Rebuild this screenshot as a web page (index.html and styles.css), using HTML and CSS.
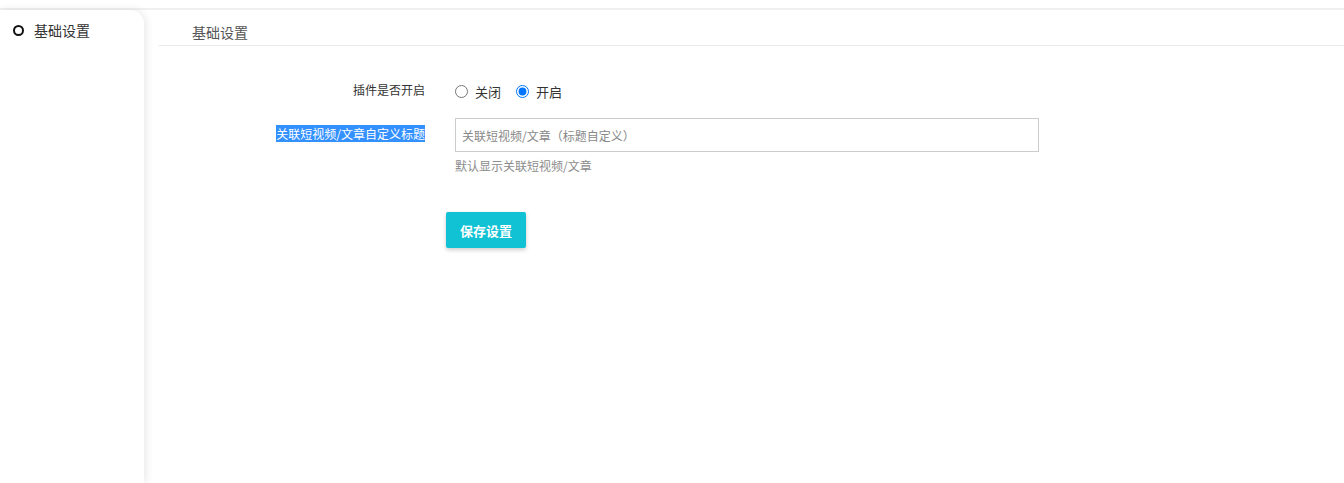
FILE: index.html
```html
<!DOCTYPE html>
<html lang="zh">
<head>
<meta charset="utf-8">
<link rel="stylesheet" href="styles.css">
</head>
<body>
<div class="topbar"></div>
<div class="layout">
  <aside class="sidebar">
    <div class="side-item">
      <span class="side-icon"></span>
      <span>基础设置</span>
    </div>
  </aside>
  <main class="main">
    <div class="tab-head"><span class="tab-title">基础设置</span></div>
    <form class="form">
      <div class="row row-radio">
        <label class="label">插件是否开启</label>
        <div class="control radios">
          <label class="radio"><input type="radio" name="on"><span>关闭</span></label>
          <label class="radio"><input type="radio" name="on" checked><span>开启</span></label>
        </div>
      </div>
      <div class="row row-input">
        <label class="label"><span class="selected">关联短视频/文章自定义标题</span></label>
        <div class="control">
          <input class="text-input" type="text" placeholder="关联短视频/文章（标题自定义）">
          <div class="help">默认显示关联短视频/文章</div>
        </div>
      </div>
      <div class="row row-btn">
        <div class="label"></div>
        <div class="control">
          <button type="button" class="btn">保存设置</button>
        </div>
      </div>
    </form>
  </main>
</div>
</body>
</html>
```

FILE: styles.css
```css
html, body {
  margin: 0;
  padding: 0;
  background: #fff;
  font-family: "Microsoft YaHei", "Noto Sans CJK SC", "Noto Sans", sans-serif;
  color: #333;
  height: 100%;
  overflow: hidden;
}

.topbar {
  height: 8px;
  background: #fff;
  border-bottom: 2px solid #f0f0f0;
}

.layout {
  display: flex;
  height: calc(100% - 10px);
}

.sidebar {
  width: 144px;
  flex: 0 0 144px;
  background: #fff;
  border-top-right-radius: 14px;
  box-shadow: 2px 0 8px rgba(0, 0, 0, 0.09);
  position: relative;
  z-index: 1;
}

.side-item {
  display: flex;
  align-items: center;
  height: 20px;
  padding: 10px 0 0 13px;
  font-size: 14px;
  color: #333;
}

.side-icon {
  width: 7px;
  height: 7px;
  border: 2px solid #111;
  border-radius: 50%;
  margin-right: 10px;
}

.main {
  flex: 1;
  padding-left: 15px;
}

.tab-head {
  height: 36px;
  border-bottom: 1px solid #ebebeb;
  display: flex;
  align-items: center;
  padding-left: 33px;
  box-sizing: border-box;
}

.tab-title {
  font-size: 14px;
  color: #555;
  margin-top: 8px;
}

.form {
  padding-top: 35px;
}

.row {
  display: flex;
}

.label {
  width: 266px;
  flex: 0 0 266px;
  text-align: right;
  font-size: 12px;
  color: #333;
}

.control {
  margin-left: 30px;
}

.row-radio {
  height: 20px;
  align-items: center;
}

.row-radio .label {
  line-height: 20px;
  margin-top: -2px;
}

.radios {
  display: flex;
  align-items: center;
  gap: 15px;
  font-size: 13px;
}

.radio {
  display: flex;
  align-items: center;
}

.radio input {
  margin: 1px 7px 0 0;
  width: 13px;
  height: 13px;
}

.row-input {
  margin-top: 17px;
}

.row-input .label {
  padding-top: 7px;
}

.selected {
  background: #3390ff;
  color: #fff;
  line-height: 17px;
  display: inline-block;
}

.text-input {
  display: block;
  width: 584px;
  height: 34px;
  box-sizing: border-box;
  border: 1px solid #ccc;
  padding: 0 6px;
  font-size: 12px;
  font-family: inherit;
  outline: none;
}

.text-input::placeholder {
  color: #888;
}

.help {
  font-size: 12px;
  color: #8c8c8c;
  margin-top: 6px;
  line-height: 16px;
}

.row-btn {
  margin-top: 38px;
}

.row-btn .control {
  margin-left: 21px;
}

.btn {
  width: 80px;
  height: 36px;
  background: #10c2d3;
  color: #fff;
  border: none;
  border-radius: 2px;
  font-size: 13px;
  font-weight: bold;
  font-family: inherit;
  box-shadow: 0 2px 4px rgba(0, 0, 0, 0.2);
  cursor: pointer;
}
```
